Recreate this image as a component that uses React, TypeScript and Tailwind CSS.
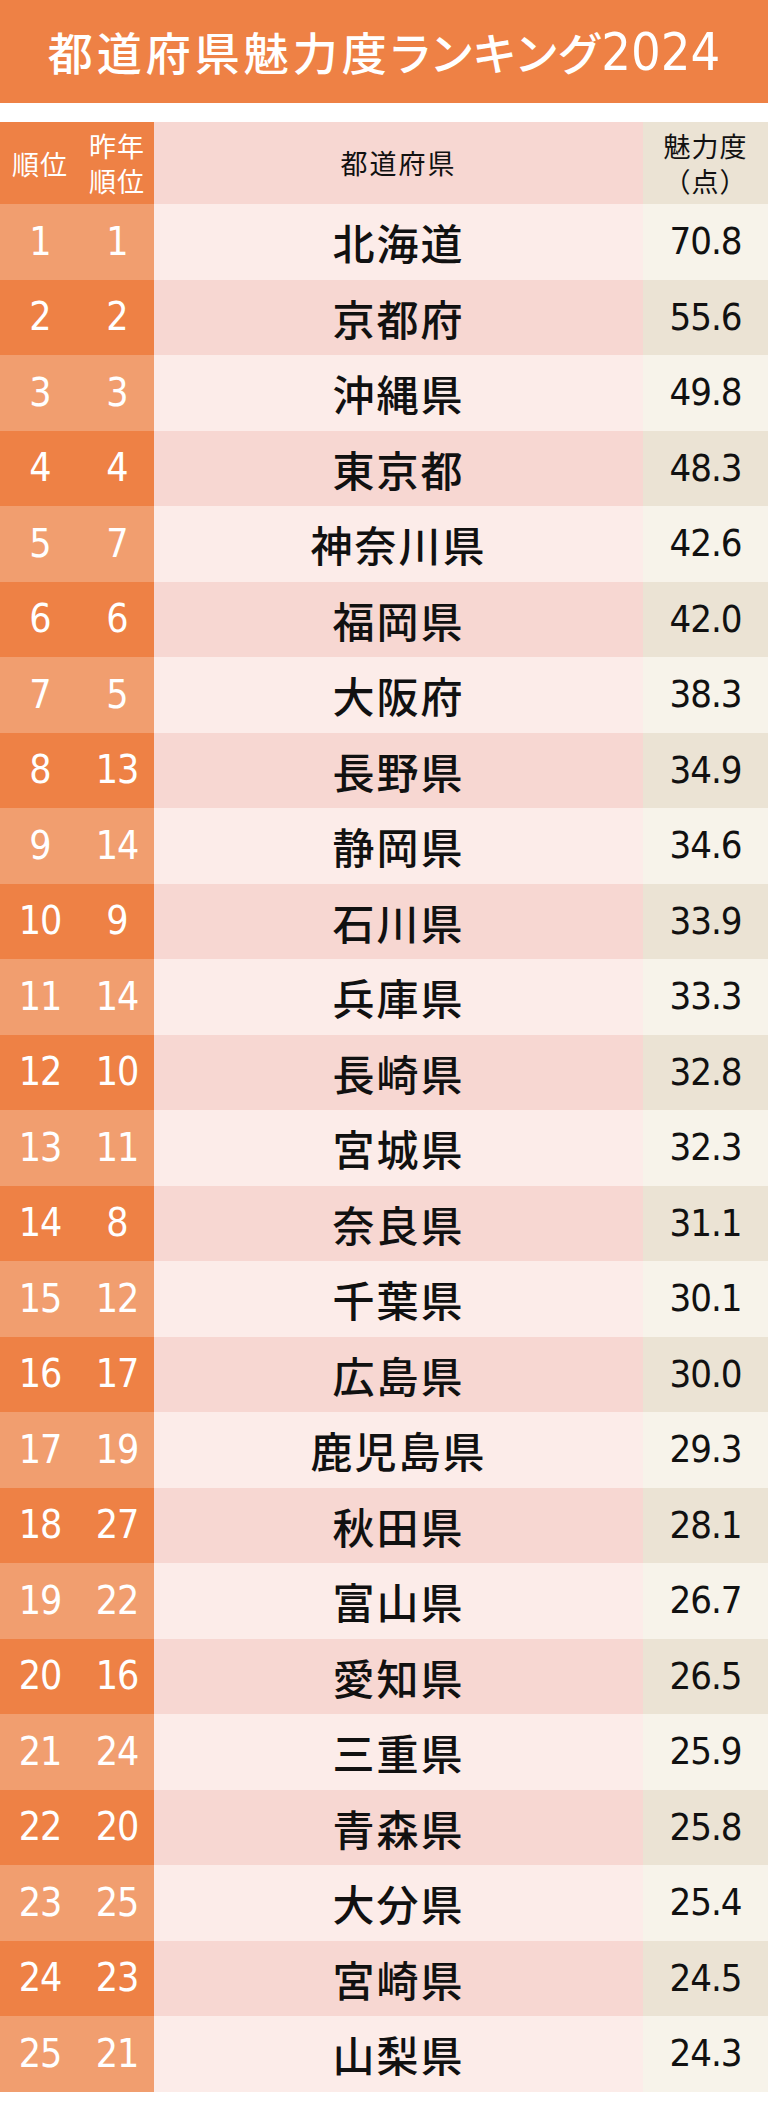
const rows: [number, number, string, string][] = [
  [1, 1, "北海道", "70.8"],
  [2, 2, "京都府", "55.6"],
  [3, 3, "沖縄県", "49.8"],
  [4, 4, "東京都", "48.3"],
  [5, 7, "神奈川県", "42.6"],
  [6, 6, "福岡県", "42.0"],
  [7, 5, "大阪府", "38.3"],
  [8, 13, "長野県", "34.9"],
  [9, 14, "静岡県", "34.6"],
  [10, 9, "石川県", "33.9"],
  [11, 14, "兵庫県", "33.3"],
  [12, 10, "長崎県", "32.8"],
  [13, 11, "宮城県", "32.3"],
  [14, 8, "奈良県", "31.1"],
  [15, 12, "千葉県", "30.1"],
  [16, 17, "広島県", "30.0"],
  [17, 19, "鹿児島県", "29.3"],
  [18, 27, "秋田県", "28.1"],
  [19, 22, "富山県", "26.7"],
  [20, 16, "愛知県", "26.5"],
  [21, 24, "三重県", "25.9"],
  [22, 20, "青森県", "25.8"],
  [23, 25, "大分県", "25.4"],
  [24, 23, "宮崎県", "24.5"],
  [25, 21, "山梨県", "24.3"],
];

const jp = "font-['Noto_Sans_CJK_JP',sans-serif]";
const num = "font-['Liberation_Sans_Narrow','DejaVu_Sans_Condensed',sans-serif]";

function Row({ rank, prev, name, score }: { rank: number; prev: number; name: string; score: string }) {
  const odd = rank % 2 === 1;
  return (
    <div className="flex h-[75.5px]">
      <div className={`flex w-[154px] text-white text-[39px] tracking-[-1px] ${num} ${odd ? "bg-[#f19e6f]" : "bg-[#ee8145]"}`}>
        <div className="w-[80px] flex items-center justify-center">{rank}</div>
        <div className="w-[74px] flex items-center justify-center">{prev}</div>
      </div>
      <div
        className={`w-[489px] flex items-center justify-center text-[42px] font-medium tracking-[2px] text-[#111] ${jp} ${
          odd ? "bg-[#fcece9]" : "bg-[#f7d7d2]"
        }`}
      >
        {name}
      </div>
      <div
        className={`flex-1 flex items-center justify-center text-[38px] tracking-[-1px] text-[#111] ${num} ${
          odd ? "bg-[#f7f3ea]" : "bg-[#ebe3d4]"
        }`}
      >
        {score}
      </div>
    </div>
  );
}

export default function App() {
  return (
    <div className="w-[768px] h-[2108px] bg-white">
      <div className="h-[103px] bg-[#ee8145] flex items-center justify-center text-white">
        <span className={`${jp} text-[45px] font-medium tracking-[4px]`}>都道府県魅力度</span>
        <span className={`${jp} text-[45px] font-medium tracking-[2px] [font-feature-settings:'palt']`}>ランキング</span>
        <span className={`${num} text-[52px]`}>2024</span>
      </div>
      <div className="mt-[19px] flex h-[82px]">
        <div className={`flex w-[154px] bg-[#ee8145] text-white text-[27px] leading-[35px] tracking-[1px] ${jp}`}>
          <div className="w-[80px] flex items-center justify-center">順位</div>
          <div className="w-[74px] flex flex-col items-center justify-center">
            <span>昨年</span>
            <span>順位</span>
          </div>
        </div>
        <div className={`w-[489px] bg-[#f7d7d2] flex items-center justify-center text-[27px] tracking-[2px] text-[#111] ${jp}`}>
          都道府県
        </div>
        <div
          className={`flex-1 bg-[#ebe3d4] flex flex-col items-center justify-center text-[27px] leading-[35px] tracking-[1px] text-[#111] ${jp}`}
        >
          <span>魅力度</span>
          <span>（点）</span>
        </div>
      </div>
      {rows.map(([rank, prev, name, score]) => (
        <Row key={rank} rank={rank} prev={prev} name={name} score={score} />
      ))}
    </div>
  );
}
